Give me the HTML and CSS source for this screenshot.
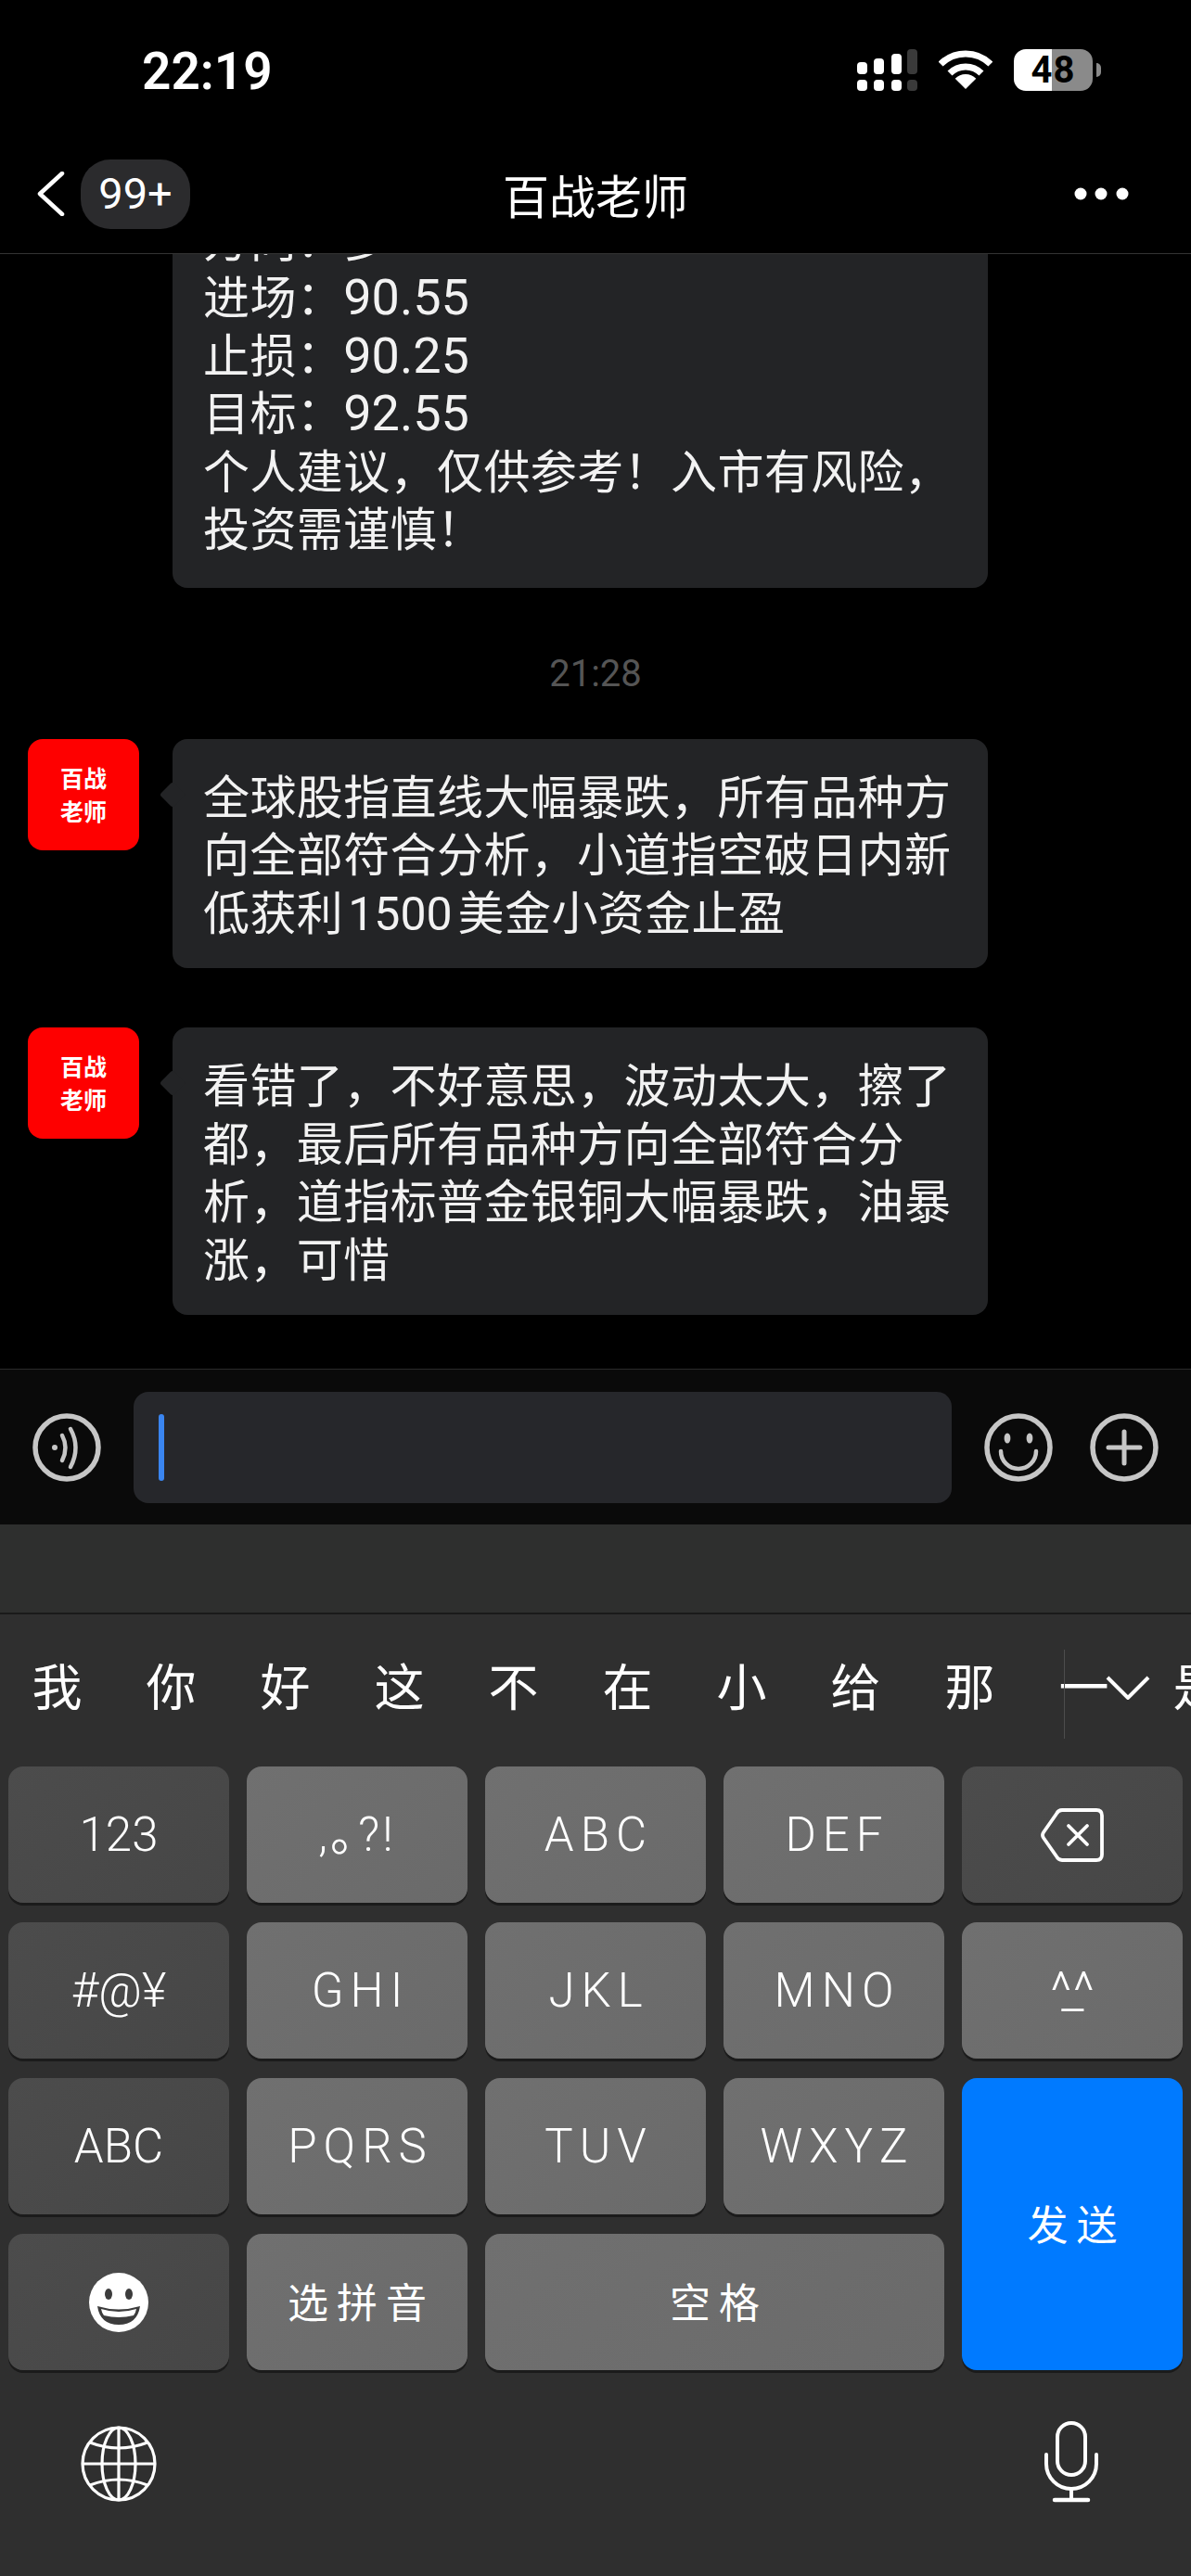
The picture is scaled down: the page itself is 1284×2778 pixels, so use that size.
FILE: index.html
```html
<!DOCTYPE html>
<html lang="zh-CN">
<head>
<meta charset="utf-8">
<title>百战老师</title>
<link rel="stylesheet" href="styles.css">
</head>
<body>
<div class="screen">
  <header class="header">
    <div class="status">
      <span class="clock">22:19</span>
      <div class="status-icons">
        <svg class="signal" width="65" height="45" viewBox="0 0 65 45">
          <rect x="0" y="14" width="11" height="13" rx="4" fill="#fff"/>
          <rect x="18" y="10" width="11" height="17" rx="4" fill="#fff"/>
          <rect x="37" y="5" width="11" height="22" rx="4" fill="#fff"/>
          <rect x="54" y="0" width="11" height="27" rx="4" fill="#3a3a3a"/>
          <rect x="0" y="33" width="11" height="12" rx="4" fill="#fff"/>
          <rect x="18" y="33" width="11" height="12" rx="4" fill="#fff"/>
          <rect x="37" y="33" width="11" height="12" rx="4" fill="#fff"/>
          <rect x="54" y="33" width="11" height="12" rx="4" fill="#3a3a3a"/>
        </svg>
        <svg class="wifi" width="58" height="43" viewBox="0 0 58 43">
          <path d="M2.1 15.1A38 38 0 0 1 55.9 15.1" fill="none" stroke="#fff" stroke-width="7"/>
          <path d="M12 25A24 24 0 0 1 46 25" fill="none" stroke="#fff" stroke-width="7"/>
          <path d="M29 42L17.7 30.7A16 16 0 0 1 40.3 30.7Z" fill="#fff"/>
        </svg>
        <div class="battery"><span class="battery-level">48</span><i class="battery-nub"></i></div>
      </div>
    </div>
    <div class="nav">
      <div class="nav-left">
        <svg width="30" height="48" viewBox="0 0 30 48"><path d="M27 2L3 24L27 46" fill="none" stroke="#fff" stroke-width="4.5" stroke-linecap="round" stroke-linejoin="round"/></svg>
        <span class="unread">99+</span>
      </div>
      <h1 class="title">百战老师</h1>
      <div class="nav-right">
        <svg width="60" height="14" viewBox="0 0 60 14"><circle cx="7" cy="7" r="6.5" fill="#fff"/><circle cx="29" cy="7" r="6.5" fill="#fff"/><circle cx="52" cy="7" r="6.5" fill="#fff"/></svg>
      </div>
    </div>
  </header>

  <main class="chat">
    <div class="msg msg-clipped">
      <div class="bubble no-tail">方向：多<br>进场：<span class="num">90.55</span><br>止损：<span class="num">90.25</span><br>目标：<span class="num">92.55</span><br>个人建议，仅供参考！入市有风险，<br>投资需谨慎！</div>
    </div>
    <div class="timestamp">21:28</div>
    <div class="msg">
      <div class="avatar">百战<br>老师</div>
      <div class="bubble">全球股指直线大幅暴跌，所有品种方向全部符合分析，小道指空破日内新低获利<span class="num spaced">1500</span>美金小资金止盈</div>
    </div>
    <div class="msg msg-last">
      <div class="avatar">百战<br>老师</div>
      <div class="bubble">看错了，不好意思，波动太大，擦了都，最后所有品种方向全部符合分析，道指标普金银铜大幅暴跌，油暴涨，可惜</div>
    </div>
  </main>

  <section class="composer">
    <svg class="round-icon" width="74" height="74" viewBox="0 0 74 74" fill="none" stroke="#c6c6c6" stroke-linecap="round">
      <circle cx="37" cy="37" r="34" stroke-width="5.5"/>
      <circle cx="24" cy="37" r="3" fill="#c6c6c6" stroke="none"/>
      <path d="M32 24Q39 37 32 51" stroke-width="4.5"/>
      <path d="M41 17Q52 37 41 58" stroke-width="4.5"/>
    </svg>
    <div class="input"><i class="caret"></i></div>
    <svg class="round-icon" width="74" height="74" viewBox="0 0 74 74" fill="none" stroke="#c6c6c6" stroke-linecap="round">
      <circle cx="37" cy="37" r="34" stroke-width="5.5"/>
      <ellipse cx="25" cy="27" rx="3.4" ry="5.5" fill="#c6c6c6" stroke="none"/>
      <ellipse cx="49" cy="27" rx="3.4" ry="5.5" fill="#c6c6c6" stroke="none"/>
      <path d="M18 41A19 19 0 0 0 56 41" stroke-width="4.5"/>
    </svg>
    <svg class="round-icon plus-icon" width="74" height="74" viewBox="0 0 74 74" fill="none" stroke="#c6c6c6" stroke-linecap="round">
      <circle cx="37" cy="37" r="34" stroke-width="5.5"/>
      <path d="M37 20V54M20 37H54" stroke-width="5"/>
    </svg>
  </section>

  <section class="keyboard">
    <div class="bar-empty"></div>
    <div class="candidates">
      <span class="cand">我</span><span class="cand">你</span><span class="cand">好</span><span class="cand">这</span><span class="cand">不</span><span class="cand">在</span><span class="cand">小</span><span class="cand">给</span><span class="cand">那</span><span class="cand">一</span><span class="cand">是</span>
      <i class="cand-divider"></i>
      <svg class="cand-more" width="48" height="26" viewBox="0 0 48 26"><path d="M2 2L24 24L46 2" fill="none" stroke="#fff" stroke-width="4"/></svg>
    </div>
    <div class="keys">
      <div class="key dark">123</div>
      <div class="key punct"><span>,<span class="tight">。</span>?!</span></div>
      <div class="key sp8">ABC</div>
      <div class="key sp8">DEF</div>
      <div class="key dark">
        <svg width="68" height="58" viewBox="0 0 68 58" fill="none" stroke="#fff" stroke-width="3.8" stroke-linecap="round" stroke-linejoin="round">
          <path d="M23 2H60Q66 2 66 8V50Q66 56 60 56H23Q19 56 17 52L3 32Q1 29 3 26L17 6Q19 2 23 2Z"/>
          <path d="M30 19L50 39M50 19L30 39"/>
        </svg>
      </div>
      <div class="key dark">#@¥</div>
      <div class="key sp8">GHI</div>
      <div class="key sp8">JKL</div>
      <div class="key sp8">MNO</div>
      <div class="key caret-face">^_^</div>
      <div class="key dark">ABC</div>
      <div class="key sp8">PQRS</div>
      <div class="key sp8">TUV</div>
      <div class="key sp8">WXYZ</div>
      <div class="key send cjk">发送</div>
      <div class="key dark">
        <svg width="66" height="66" viewBox="0 0 66 66">
          <circle cx="33" cy="33" r="32" fill="#fff"/>
          <ellipse cx="22" cy="24" rx="4" ry="6" fill="#3c3c3c"/>
          <ellipse cx="44" cy="24" rx="4" ry="6" fill="#3c3c3c"/>
          <path d="M10 37Q33 44 56 37Q53 57 33 57Q13 57 10 37Z" fill="#3c3c3c"/>
          <path d="M14 40Q33 46 52 40Q51 45 49 47Q33 51 17 47Q15 45 14 40Z" fill="#fff"/>
        </svg>
      </div>
      <div class="key cjk">选拼音</div>
      <div class="key cjk space">空格</div>
    </div>
    <div class="kb-bottom">
      <svg class="globe" width="82" height="82" viewBox="0 0 82 82" fill="none" stroke="#fff" stroke-width="3.2">
        <circle cx="41" cy="41" r="39"/>
        <ellipse cx="41" cy="41" rx="18" ry="39"/>
        <path d="M41 2V80M2 41H80"/>
        <path d="M10 18Q41 30 72 18M10 64Q41 52 72 64"/>
      </svg>
      <svg width="60" height="88" viewBox="0 0 60 88" fill="none" stroke="#fff" stroke-width="4" stroke-linecap="round">
        <rect x="15" y="2" width="30" height="56" rx="15"/>
        <path d="M3 36V46A27 27 0 0 0 57 46V36"/>
        <path d="M30 73V85"/>
        <path d="M12 85H48" stroke-width="4.5"/>
      </svg>
    </div>
  </section>
</div>
</body>
</html>
```

FILE: styles.css
```css
* { box-sizing: border-box; }
html, body { margin: 0; padding: 0; background: #000; }
body {
  font-family: "Noto Sans CJK SC", "Roboto", sans-serif;
  color: #fff;
}
.screen {
  width: 1284px;
  height: 2778px;
  display: flex;
  flex-direction: column;
  overflow: hidden;
}

/* header */
.header {
  flex: none;
  height: 274px;
  background: #000;
  border-bottom: 1px solid #333;
}
.status {
  height: 145px;
  padding: 53px 106px 0 153px;
  display: flex;
  justify-content: space-between;
  align-items: flex-start;
}
.clock {
  font-family: "Roboto", sans-serif;
  font-weight: 600;
  font-size: 55px;
  line-height: 48px;
}
.status-icons { display: flex; align-items: flex-start; }
.signal { display: block; }
.wifi { display: block; margin-left: 23px; margin-top: 1px; }
.battery {
  position: relative;
  width: 85px;
  height: 45px;
  margin-left: 23px;
  border-radius: 13px;
  background: linear-gradient(90deg, #fff 0 41px, #8a8a8a 41px);
  color: #000;
  font-family: "Roboto", sans-serif;
  font-weight: 700;
  font-size: 40px;
  line-height: 45px;
  text-align: center;
}
.battery-level { letter-spacing: 1px; }
.battery-nub {
  position: absolute;
  left: 89px;
  top: 15px;
  width: 5px;
  height: 15px;
  border-radius: 0 8px 8px 0;
  background: #8a8a8a;
}
.nav {
  height: 128px;
  padding: 0 40px;
  display: grid;
  grid-template-columns: 1fr auto 1fr;
  align-items: center;
}
.nav-left { display: flex; align-items: center; gap: 17px; }
.nav-left svg { display: block; }
.unread {
  width: 118px;
  height: 75px;
  border-radius: 32px;
  background: #2b2b2d;
  font-family: "Roboto", sans-serif;
  font-size: 47px;
  line-height: 73px;
  text-align: center;
}
.title {
  margin: 0;
  font-size: 50px;
  font-weight: 400;
  line-height: 60px;
}
.nav-right { display: flex; justify-content: flex-end; padding-right: 26px; }
.nav-right svg { display: block; }

/* chat */
.chat {
  flex: 1;
  min-height: 0;
  padding-bottom: 58px;
  display: flex;
  flex-direction: column;
  justify-content: flex-end;
  overflow: hidden;
  background: #000;
}
.msg {
  flex: none;
  display: flex;
  align-items: flex-start;
  gap: 36px;
  padding-left: 30px;
  margin-bottom: 64px;
}
.msg-last { margin-bottom: 0; }
.msg-clipped { padding-left: 186px; margin-bottom: 0; }
.avatar {
  flex: none;
  width: 120px;
  height: 120px;
  border-radius: 16px;
  background: #fe0000;
  font-size: 25px;
  font-weight: 700;
  line-height: 36px;
  text-align: center;
  padding-top: 23px;
}
.bubble {
  position: relative;
  width: 879px;
  padding: 28px 30px 32px 33px;
  border-radius: 16px;
  background: #232426;
  font-size: 50px;
  font-weight: 400;
  line-height: 62.5px;
  letter-spacing: 0.4px;
  color: #f2f2f2;
}
.bubble::before {
  content: "";
  position: absolute;
  left: -10px;
  top: 50px;
  width: 20px;
  height: 20px;
  border-radius: 3px;
  background: #232426;
  transform: rotate(45deg);
}
.no-tail { padding-bottom: 35px; }
.no-tail::before { display: none; }
.num {
  font-family: "Roboto", sans-serif;
  font-size: 54px;
  font-weight: 400;
  line-height: 1;
  letter-spacing: 0;
}
.spaced { font-size: 50px; margin: 0 6px 0 5px; }
.timestamp {
  flex: none;
  height: 52px;
  margin: 67px 0 44px;
  font-family: "Roboto", sans-serif;
  font-size: 40px;
  line-height: 52px;
  text-align: center;
  color: #555;
}

/* composer */
.composer {
  flex: none;
  height: 168px;
  padding-left: 35px;
  display: flex;
  align-items: center;
  gap: 35px;
  background: #0a0a0a;
  border-top: 1px solid #2a2a2a;
}
.round-icon { flex: none; display: block; }
.plus-icon { margin-left: 5px; }
.input {
  flex: none;
  width: 882px;
  height: 120px;
  padding-left: 27px;
  display: flex;
  align-items: center;
  border-radius: 16px;
  background: #26272b;
}
.caret {
  width: 6px;
  height: 72px;
  border-radius: 3px;
  background: #3a85f0;
}

/* keyboard */
.keyboard {
  flex: none;
  height: 1134px;
  display: flex;
  flex-direction: column;
  background: #2f2f2f;
}
.bar-empty {
  flex: none;
  height: 97px;
  background: #2e2f2e;
  border-bottom: 2px solid #1a1a1a;
}
.candidates {
  position: relative;
  flex: none;
  height: 164px;
  padding-top: 46px;
  display: flex;
  overflow: hidden;
}
.cand {
  flex: none;
  width: 123px;
  font-size: 54px;
  font-weight: 400;
  line-height: 60px;
  text-align: center;
}
.cand-divider {
  position: absolute;
  left: 1147px;
  top: 38px;
  width: 1px;
  height: 96px;
  background: #4d4d4d;
}
.cand-more {
  position: absolute;
  left: 1192px;
  top: 66px;
}
.keys {
  flex: none;
  padding: 0 9px;
  display: grid;
  grid-template-columns: repeat(5, 238px);
  grid-auto-rows: 147px;
  gap: 21px 19px;
}
.key {
  display: flex;
  align-items: center;
  justify-content: center;
  border-radius: 16px;
  background: linear-gradient(135deg, #707070, #6a6a6a);
  box-shadow: 0 3px 0 #1b1b1b;
  font-family: "Roboto", sans-serif;
  font-weight: 300;
  font-size: 51px;
  line-height: 1;
}
.dark { background: linear-gradient(135deg, #4c4c4c, #464646); }
.sp8 { letter-spacing: 7px; text-indent: 7px; }
.tight { margin-right: -24px; }
.punct { letter-spacing: 3px; }
.cjk {
  font-family: "Noto Sans CJK SC", sans-serif;
  font-weight: 400;
  font-size: 44px;
  letter-spacing: 9px;
  text-indent: 9px;
  padding-bottom: 4px;
}
.send {
  grid-column: 5;
  grid-row: 3 / span 2;
  background: #007aff;
}
.space { grid-column: 3 / span 2; }
.caret-face { font-size: 56px; letter-spacing: -11.5px; padding-right: 11px; }
.kb-bottom {
  flex: 1;
  padding: 55px 99px 0 87px;
  display: flex;
  justify-content: space-between;
  align-items: flex-start;
}
.globe { margin-top: 5px; }
```
